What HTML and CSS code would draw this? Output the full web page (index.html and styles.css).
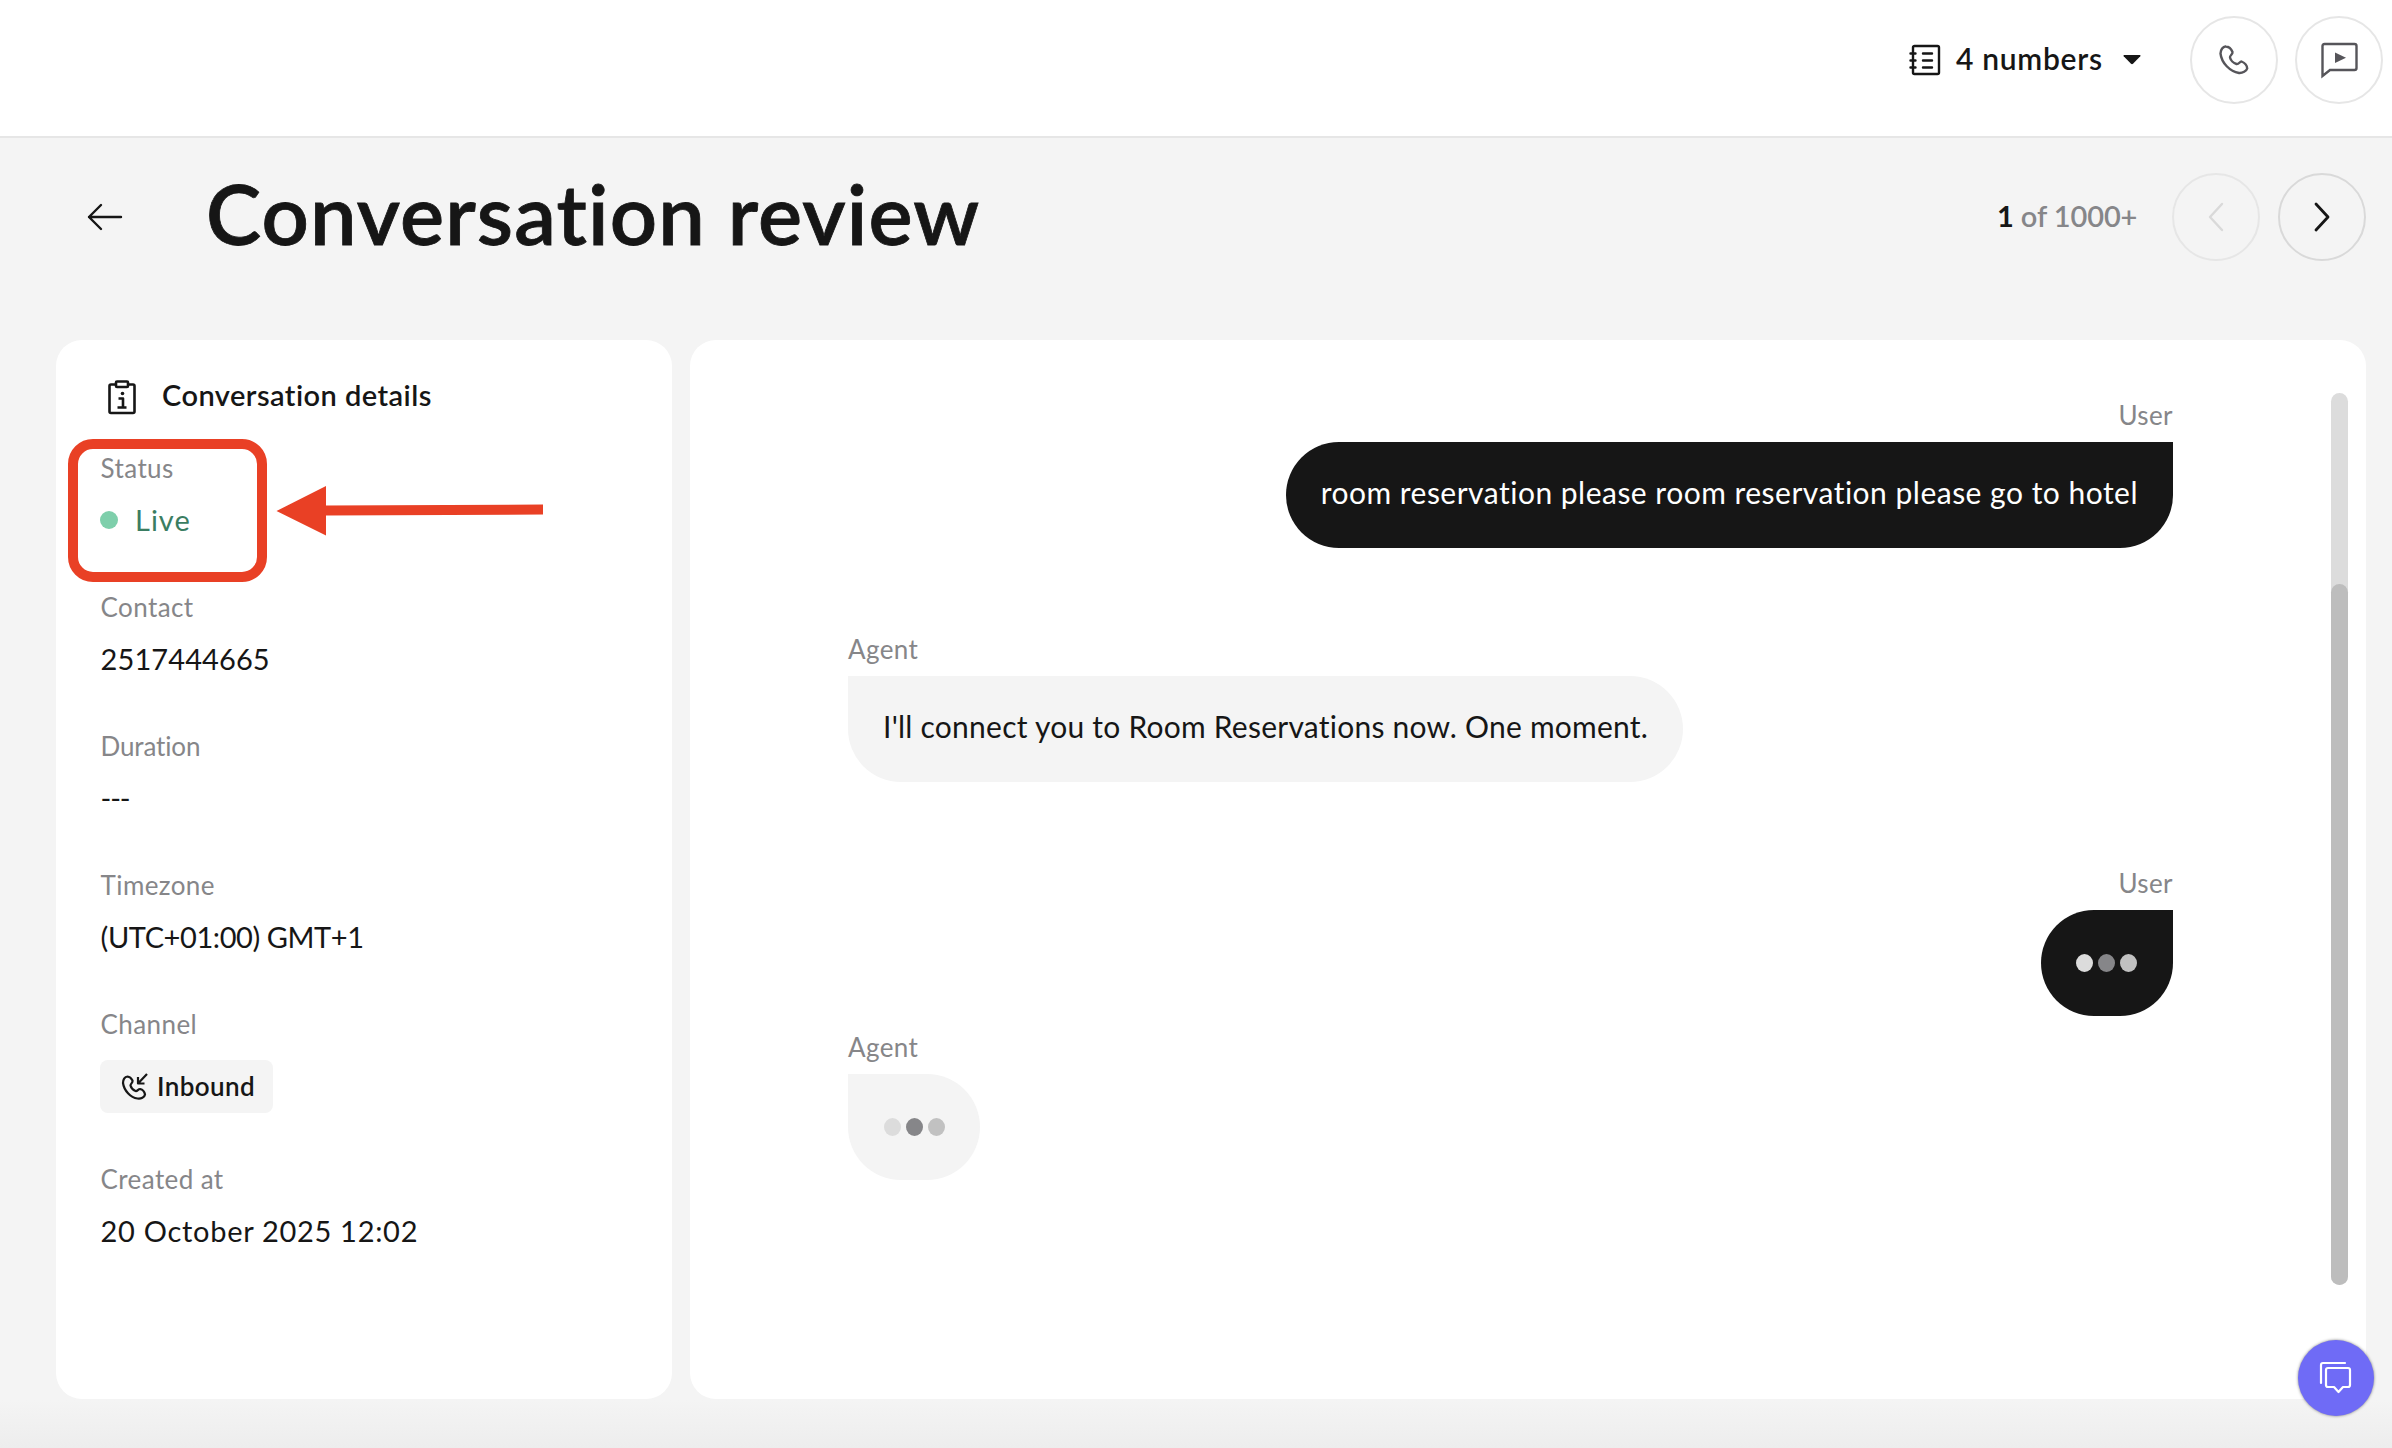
FILE: index.html
```
<!DOCTYPE html>
<html lang="en">
<head>
<meta charset="utf-8">
<title>Conversation review</title>
<link rel="stylesheet" href="styles.css">
</head>
<body>
<header class="topbar">
  <div class="numbers">
    <svg width="32" height="32" viewBox="0 0 32 32" fill="none" stroke="#161616" stroke-width="2.4" stroke-linecap="round"><rect x="4" y="2" width="26" height="28" rx="1.5"/><path d="M1.500 9.500h5M1.500 16.500h5M1.500 23.500h5M14 9.500h9M14 16.500h9M14 23.500h9"/></svg>
    <span class="numbers-text">4 numbers</span>
    <svg width="20" height="12" viewBox="0 0 20 12"><path d="M2 1h16q1 0.400 .3 1.200L11 9.700q-1 .9-2 0L1.700 2.200Q1 1.400 2 1z" fill="#161616"/></svg>
  </div>
  <button class="round top-btn" aria-label="Call"><svg width="34" height="34" viewBox="0 0 34 34" fill="none" stroke="#56555a" stroke-width="2.400" stroke-linejoin="round"><path d="M9 3.500C6 3 3.500 7 3.500 10.500C4.500 20 13 28.500 22 30C25.500 30.300 29.500 28 30.200 25.500C30 22 27 19.500 24.500 18.500C22.500 18.500 22 21.500 19.500 21C16.500 20 13.500 17 13 14.500C12.500 12.500 16 11.500 15.500 9C14.500 6.500 12 3.700 9 3.500Z"/></svg></button>
  <button class="round top-btn" aria-label="Test chat"><svg width="40" height="40" viewBox="0 0 40 40" fill="none" stroke="#56555a" stroke-width="2.400"><path d="M3.500 36V6q0-2 2-2h30q2 0 2 2v22q0 2-2 2H11z"/><path d="M16 12.500v10.500l11-5.300z" fill="#56555a" stroke="none"/></svg></button>
</header>

<section class="heading">
  <svg width="40" height="32" viewBox="0 0 40 32" fill="none" stroke="#161616" stroke-width="2.400" stroke-linecap="round" stroke-linejoin="round"><path d="M36 16H4M16 4L4 16l12 12"/></svg>
  <h1 class="title">Conversation review</h1>
  <div class="pager">
    <span class="pager-text"><b>1</b> of 1000+</span>
    <button class="round" aria-label="Previous"><svg width="20" height="32" viewBox="0 0 20 32" fill="none" stroke="#d9d9d9" stroke-width="2.400" stroke-linecap="round" stroke-linejoin="round"><path d="M16 3L4 16l12 13"/></svg></button>
    <button class="round next" aria-label="Next"><svg width="20" height="32" viewBox="0 0 20 32" fill="none" stroke="#161616" stroke-width="2.800" stroke-linecap="round" stroke-linejoin="round"><path d="M4 3l12 13L4 29"/></svg></button>
  </div>
</section>

<main class="columns">
  <aside class="card details">
    <h2 class="details-head">
      <svg width="32" height="38" viewBox="0 0 32 38" fill="none" stroke="#161616" stroke-width="2.600" stroke-linejoin="round"><path d="M10 5.500H5q-1.500 0-1.500 1.500V32.500q0 1.500 1.500 1.500h22q1.500 0 1.500-1.500V7Q28.500 5.500 27 5.500h-5"/><rect x="10" y="2.500" width="12" height="5.500" rx="1"/><path d="M12.500 19.500H17V28M11.500 28.500h9"/><circle cx="16.500" cy="14.500" r="1.800" fill="#161616" stroke="none"/></svg>
      <span class="details-title">Conversation details</span>
    </h2>
    <div class="field status"><div class="label">Status</div><div class="value live"><i class="dot"></i>Live</div></div>
    <div class="field"><div class="label">Contact</div><div class="value phone">2517444665</div></div>
    <div class="field"><div class="label duration">Duration</div><div class="value empty">---</div></div>
    <div class="field"><div class="label">Timezone</div><div class="value zone">(UTC+01:00) GMT+1</div></div>
    <div class="field channel"><div class="label">Channel</div>
      <div class="badge"><svg width="28" height="28" viewBox="0 0 28 28" fill="none" stroke="#161616" stroke-width="2.200" stroke-linejoin="round"><path d="M6.500 4.500C3.500 4.500 2 8 2 11C3 18.500 9.500 25.500 16.500 26.500C20 27 23.500 25.500 24 22.500C23.500 19.500 21 17.500 19 17C17 17 16.500 19.500 14.500 19C12 18 10 15.500 9.500 13.500C9.500 11.500 12 11 11.500 8.500C10.500 6.500 9 4.700 6.500 4.500Z"/><path d="M26 2L17 11.500M17 5v6.500h6.500"/></svg>Inbound</div>
    </div>
    <div class="field"><div class="label">Created at</div><div class="value date">20 October 2025 12:02</div></div>
    <div class="highlight"></div>
    <svg class="pointer" width="268" height="52" viewBox="0 0 268 52" fill="#e94025"><path d="M.5 26L50 1v19.500L267 19.500v10L50 30.500v20z"/></svg>
  </aside>

  <section class="card chat">
    <div class="thread">
      <div class="msg user"><div class="who">User</div><div class="bubble">room reservation please room reservation please go to hotel</div></div>
      <div class="msg agent"><div class="who">Agent</div><div class="bubble">I'll connect you to Room Reservations now. One moment.</div></div>
      <div class="msg user pending"><div class="who">User</div><div class="bubble typing"><i></i><i></i><i></i></div></div>
      <div class="msg agent"><div class="who">Agent</div><div class="bubble typing"><i></i><i></i><i></i></div></div>
    </div>
    <div class="scroll"><div class="thumb"></div></div>
  </section>
</main>
<button class="launcher" aria-label="Open chat"><svg width="36" height="36" viewBox="0 0 36 36" fill="none" stroke="#fff" stroke-width="2.200" stroke-linejoin="round" stroke-linecap="round"><path d="M3 23V5q0-2 2-2h22"/><path d="M10 8h20q2 0 2 2v15q0 2-2 2h-5l-4.500 5L16 27h-6q-2 0-2-2V10q0-2 2-2z"/></svg></button>
</body>
</html>
```
FILE: styles.css
```
* { box-sizing: border-box; }
body { margin: 0; width: 2392px; height: 1448px; overflow: hidden; display: flex; flex-direction: column; background: linear-gradient(#f4f4f4 1400px, #ededed 1448px); font-family: Lato, "Liberation Sans", sans-serif; font-variant-ligatures: none; color: #161616; }
button { padding: 0; }
svg { flex: none; display: block; }

.topbar { height: 138px; border-bottom: 2px solid #e6e6e6; background: #fff; display: flex; align-items: flex-start; justify-content: flex-end; padding: 16px 9px 0 0; }
.numbers { display: flex; align-items: center; height: 88px; margin-right: 48px; }
.numbers-text { font-size: 30px; font-weight: 600; letter-spacing: .7px; white-space: nowrap; width: 145px; margin: 0 21px 0 15px; padding-bottom: 5px; }
.round { width: 88px; height: 88px; border-radius: 50%; border: 2px solid #e6e6e6; background: none; display: flex; align-items: center; justify-content: center; flex: none; }
.top-btn + .top-btn { margin-left: 17px; }

.heading { display: flex; align-items: center; height: 202px; padding: 0 26px 44px 85px; }
.title { margin: 0 0 0 81px; padding-bottom: 8px; font-size: 83px; line-height: 98px; font-weight: 600; letter-spacing: 1.15px; -webkit-text-stroke: .8px #161616; white-space: nowrap; }
.pager { margin-left: auto; display: flex; align-items: center; }
.pager-text { font-size: 29px; font-weight: 600; color: #868689; white-space: nowrap; width: 139px; margin-right: 36px; padding-bottom: 4px; letter-spacing: -.1px; }
.pager-text b { color: #161616; font-weight: 700; }
.next { margin-left: 18px; border-color: #d9d9d9; }

.columns { display: flex; gap: 18px; padding: 0 26px 0 56px; height: 1059px; }
.card { background: #fff; border-radius: 26px; }
.details { width: 616px; padding: 38px 44px 0; position: relative; }
.details-head { margin: 0; display: flex; align-items: center; height: 40px; gap: 24px; padding-left: 6px; font-size: 29px; font-weight: 600; letter-spacing: .45px; }
.details-title { padding-bottom: 7px; }
.field { margin-bottom: 45px; }
.status { margin-top: 30px; }
.label { font-size: 26px; line-height: 40px; color: #868689; padding-left: .6px; letter-spacing: .4px; }
.label.duration { letter-spacing: -.15px; }
.value { margin-top: 10px; font-size: 29px; line-height: 44px; display: flex; align-items: center; padding-left: .6px; }
.value.phone { letter-spacing: .1px; }
.value.empty { letter-spacing: -1.2px; }
.value.zone { letter-spacing: -.41px; }
.value.date { letter-spacing: .7px; }
.value.live { color: #3a7d62; gap: 17px; padding: 0; letter-spacing: 1px; }
.dot { width: 18px; height: 18px; border-radius: 50%; background: #7ecfab; }
.badge { margin-top: 16px; width: 173px; height: 53px; border-radius: 8px; background: #f4f4f4; display: flex; align-items: center; gap: 8px; padding: 0 0 2px 21px; font-size: 26px; font-weight: 600; letter-spacing: .4px; }
.channel { margin-bottom: 46px; }
.highlight { position: absolute; left: 12px; top: 99px; width: 199px; height: 143px; border: 10px solid #e94025; border-radius: 25px; }
.pointer { position: absolute; left: 220px; top: 145px; }

.chat { flex: 1; display: flex; justify-content: space-between; padding: 52px 18px 0 158px; }
.thread { width: 1325px; display: flex; flex-direction: column; padding-top: 3px; }
.msg { display: flex; flex-direction: column; align-items: flex-start; margin-bottom: 81px; }
.msg.user { align-items: flex-end; }
.msg.pending { margin-bottom: 11px; }
.who { font-size: 26px; line-height: 40px; margin-bottom: 7px; color: #868689; letter-spacing: .4px; }
.bubble { height: 106px; border-radius: 0 53px 53px 53px; background: #f4f4f4; padding: 0 35px 6px; display: flex; align-items: center; font-size: 30px; letter-spacing: .24px; white-space: nowrap; }
.user .bubble { background: #161616; color: #fff; border-radius: 53px 0 53px 53px; letter-spacing: .49px; }
.bubble.typing { gap: 5px; padding: 0 36px 0 35px; }
.agent .typing { padding: 0 35px 0 36px; }
.typing i { width: 17px; height: 18px; border-radius: 50%; background: #dcdcdc; }
.typing i:nth-child(2) { background: #868689; }
.typing i:nth-child(3) { background: #c1c1c1; }
.scroll { width: 17px; height: 892px; margin-top: 1px; border-radius: 9px; background: #dcdcdc; padding-top: 191px; }
.thumb { height: 701px; border-radius: 9px; background: #bdbdbd; }
.launcher { position: absolute; left: 2298px; top: 1340px; width: 76px; height: 76px; border: 0; border-radius: 50%; background: #6f6bf6; box-shadow: 0 0 3px rgba(0,0,0,.5); display: flex; align-items: center; justify-content: center; }
```
